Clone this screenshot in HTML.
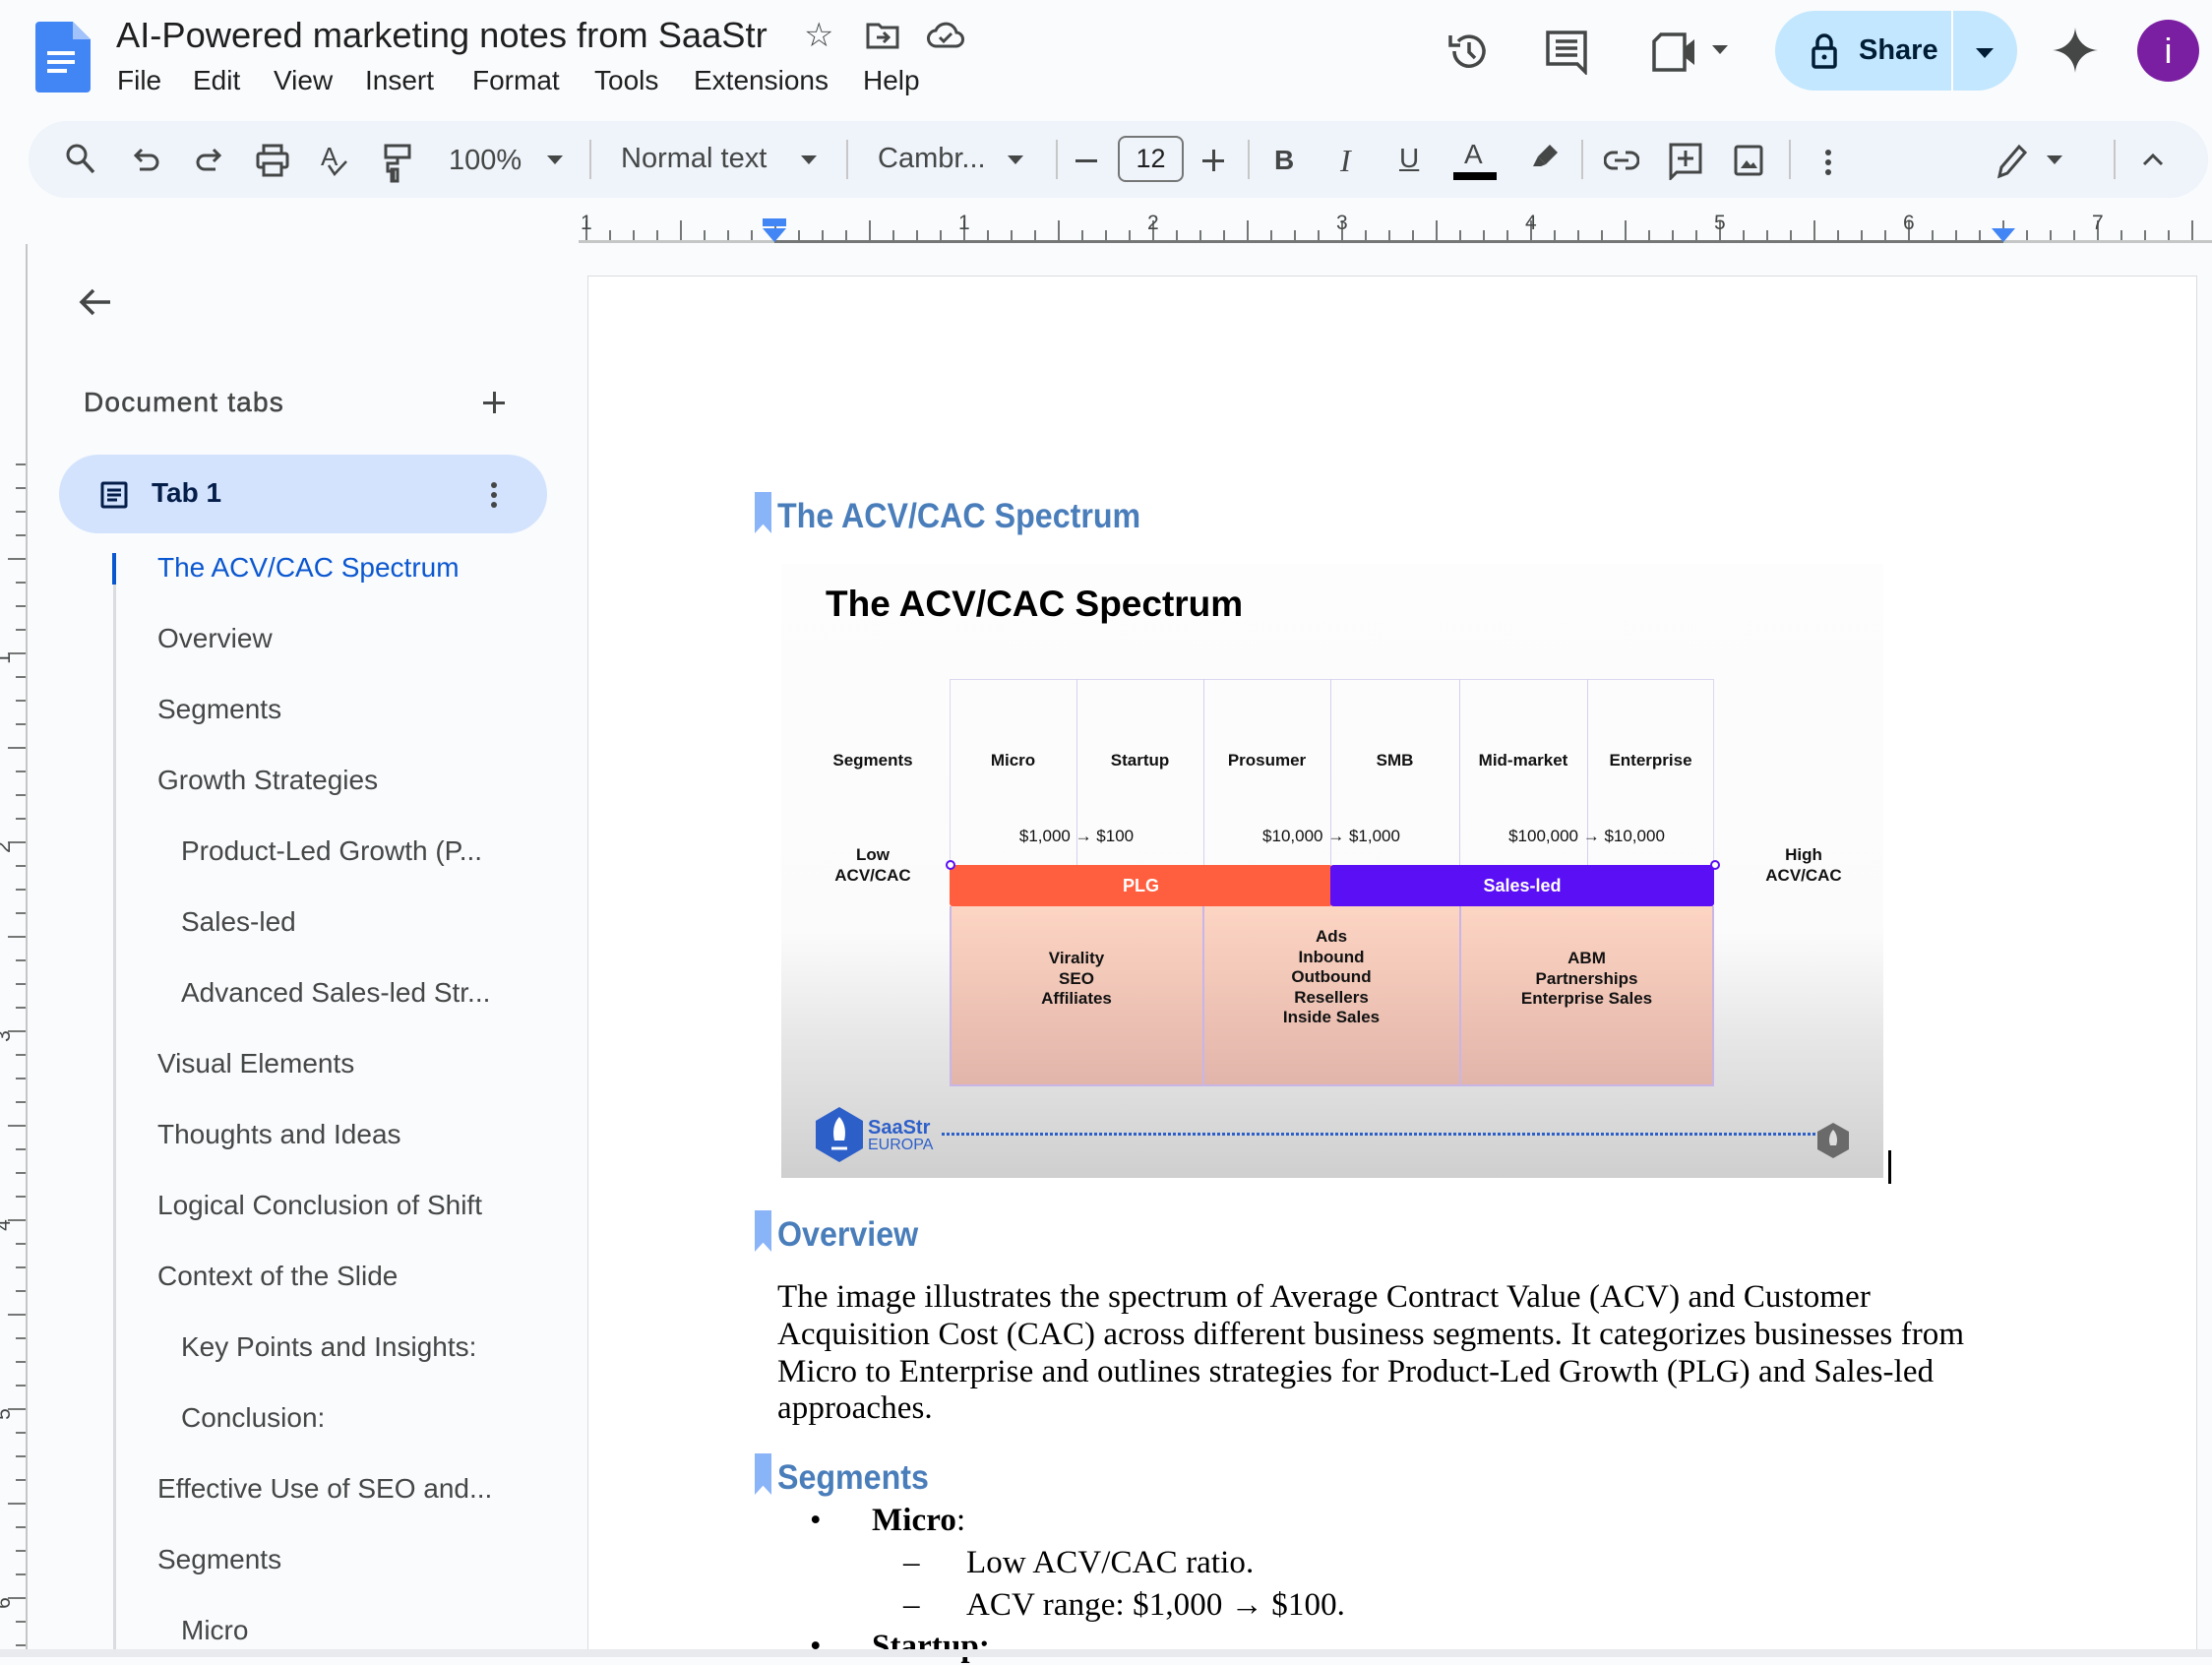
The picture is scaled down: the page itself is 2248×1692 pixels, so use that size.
<!DOCTYPE html>
<html><head><meta charset="utf-8">
<style>
*{margin:0;padding:0;box-sizing:border-box}
body{width:2248px;height:1684px;overflow:hidden;background:#f9fbfd;font-family:"Liberation Sans",sans-serif;color:#1f1f1f;position:relative}
.a{position:absolute;white-space:nowrap}
.ic{position:absolute}
.menu span{position:absolute;top:0}
.tb{color:#444746;font-size:29px}
.sep{position:absolute;top:142px;width:2px;height:40px;background:#c7c7c7}
.out{position:absolute;font-size:28px;color:#444746;white-space:nowrap}
.h{position:absolute;font-family:"Liberation Sans Narrow","Liberation Sans",sans-serif;font-weight:bold;color:#4a7ebb;font-size:35px;white-space:nowrap;transform:scaleX(0.92);transform-origin:0 0}
.bm{position:absolute;width:17px;height:42px;background:#8ab4f8;clip-path:polygon(0 0,100% 0,100% 100%,50% 78%,0 100%)}
.ser{font-family:"Liberation Serif",serif;font-size:33px;color:#000;position:absolute;white-space:nowrap;letter-spacing:0.1px}
.sl{position:absolute;font-weight:bold;font-size:17px;text-align:center;line-height:20.5px;color:#111}
</style></head><body>

<svg class="ic" style="left:36px;top:22px" width="56" height="72" viewBox="0 0 56 72"><path d="M4 0h34l18 18v50a4 4 0 0 1-4 4H4a4 4 0 0 1-4-4V4a4 4 0 0 1 4-4z" fill="#4285f4"/><path d="M38 0v18h18z" fill="#a1c2fa"/><rect x="12" y="30" width="28" height="4" fill="#fff"/><rect x="12" y="39" width="28" height="4" fill="#fff"/><rect x="12" y="48" width="20" height="4" fill="#fff"/></svg>
<div class="a" style="left:118px;top:15px;font-size:36.3px;color:#1f1f1f">AI-Powered marketing notes from SaaStr</div>
<div class="a" style="left:817px;top:16px;font-size:34px;color:#444746">☆</div>
<svg class="ic" style="left:880px;top:22px" width="34" height="28" viewBox="0 0 34 28"><path d="M2 3h11l3 3h16v20H2z" fill="none" stroke="#444746" stroke-width="3"/><path d="M11 16h12M18 11l5 5-5 5" fill="none" stroke="#444746" stroke-width="3"/></svg>
<svg class="ic" style="left:942px;top:20px" width="38" height="30" viewBox="0 0 38 30"><path d="M10 27a8 8 0 0 1-1-16 11 11 0 0 1 21 2 7 7 0 0 1-1 14z" fill="none" stroke="#444746" stroke-width="3"/><path d="M13 18l4 4 8-8" fill="none" stroke="#444746" stroke-width="3"/></svg>
<div class="a menu" style="left:0;top:66px;font-size:28px;color:#1f1f1f"><span style="left:119px">File</span><span style="left:196px">Edit</span><span style="left:278px">View</span><span style="left:371px">Insert</span><span style="left:480px">Format</span><span style="left:604px">Tools</span><span style="left:705px">Extensions</span><span style="left:877px">Help</span></div>

<svg class="ic" style="left:1470px;top:30px" width="44" height="44" viewBox="0 0 44 44"><path d="M8 22a15 15 0 1 0 4-10" fill="none" stroke="#444746" stroke-width="3.5"/><path d="M4 6v10h10" fill="none" stroke="#444746" stroke-width="3.5"/><path d="M23 13v10l6 6" fill="none" stroke="#444746" stroke-width="3.5"/></svg>
<svg class="ic" style="left:1570px;top:30px" width="44" height="46" viewBox="0 0 44 46"><path d="M3 3h38v30h0v10l-8-8H3z" fill="none" stroke="#444746" stroke-width="3.5"/><path d="M11 12h22M11 19h22M11 26h22" stroke="#444746" stroke-width="3.5"/></svg>
<svg class="ic" style="left:1678px;top:32px" width="48" height="42" viewBox="0 0 48 42"><path d="M10 3h24v36H3V10z" fill="none" stroke="#444746" stroke-width="3.5"/><path d="M34 16l10-8v26l-10-8z" fill="#444746"/></svg>
<div class="a" style="left:1740px;top:46px;width:0;height:0;border-left:8px solid transparent;border-right:8px solid transparent;border-top:9px solid #444746"></div>
<div class="a" style="left:1804px;top:11px;width:246px;height:81px;border-radius:41px;background:#c2e7ff"></div>
<div class="a" style="left:1983px;top:11px;width:2px;height:81px;background:#fff"></div>
<svg class="ic" style="left:1841px;top:34px" width="26" height="36" viewBox="0 0 26 36"><rect x="2" y="15" width="22" height="19" rx="2" fill="none" stroke="#001d35" stroke-width="3.5"/><path d="M6 15V9a7 7 0 0 1 14 0v6" fill="none" stroke="#001d35" stroke-width="3.5"/><circle cx="13" cy="24" r="2.5" fill="#001d35"/></svg>
<div class="a" style="left:1889px;top:35px;font-size:29px;color:#001d35;font-weight:bold">Share</div>
<div class="a" style="left:2008px;top:49px;width:0;height:0;border-left:9px solid transparent;border-right:9px solid transparent;border-top:10px solid #001d35"></div>
<svg class="ic" style="left:2086px;top:28px" width="46" height="46" viewBox="0 0 46 46"><path d="M23 0C24 13 33 22 46 23 33 24 24 33 23 46 22 33 13 24 0 23 13 22 22 13 23 0z" fill="#444746"/></svg>
<div class="a" style="left:2172px;top:20px;width:63px;height:63px;border-radius:50%;background:#7b1fa2;color:#fff;font-size:36px;text-align:center;line-height:63px">i</div>

<div class="a" style="left:29px;top:123px;width:2215px;height:78px;border-radius:39px;background:#eff3fa"></div>
<svg class="ic" style="left:66px;top:145px" width="32" height="34" viewBox="0 0 32 34"><circle cx="12" cy="12" r="9" fill="none" stroke="#444746" stroke-width="3"/><path d="M19 19l10 11" stroke="#444746" stroke-width="3.5"/></svg>
<svg class="ic" style="left:134px;top:150px" width="30" height="28" viewBox="0 0 30 28"><path d="M6 8h13a7 7 0 0 1 0 14H8" fill="none" stroke="#444746" stroke-width="3"/><path d="M10 2L4 8l6 6" fill="none" stroke="#444746" stroke-width="3"/></svg>
<svg class="ic" style="left:197px;top:150px" width="30" height="28" viewBox="0 0 30 28"><path d="M24 8H11a7 7 0 0 0 0 14h11" fill="none" stroke="#444746" stroke-width="3"/><path d="M20 2l6 6-6 6" fill="none" stroke="#444746" stroke-width="3"/></svg>
<svg class="ic" style="left:260px;top:146px" width="34" height="34" viewBox="0 0 34 34"><rect x="8" y="2" width="18" height="8" fill="none" stroke="#444746" stroke-width="3"/><rect x="2" y="10" width="30" height="14" rx="2" fill="none" stroke="#444746" stroke-width="3"/><rect x="8" y="20" width="18" height="12" fill="#eff3fa" stroke="#444746" stroke-width="3"/></svg>
<div class="a" style="left:326px;top:144px;font-size:26px;color:#444746">A</div>
<svg class="ic" style="left:332px;top:162px" width="22" height="18" viewBox="0 0 22 18"><path d="M2 6l6 9L20 2" fill="none" stroke="#444746" stroke-width="2.5"/></svg>
<svg class="ic" style="left:390px;top:146px" width="28" height="40" viewBox="0 0 28 40"><rect x="2" y="2" width="24" height="12" fill="none" stroke="#444746" stroke-width="3"/><path d="M14 14v6H4v8h6v10" fill="none" stroke="#444746" stroke-width="3"/><rect x="8" y="26" width="6" height="12" fill="none" stroke="#444746" stroke-width="3"/></svg>
<div class="a tb" style="left:456px;top:147px">100%</div>
<div class="a" style="left:556px;top:158px;border-left:8px solid transparent;border-right:8px solid transparent;border-top:9px solid #444746"></div>
<div class="sep" style="left:599px"></div>
<div class="a tb" style="left:631px;top:145px">Normal text</div>
<div class="a" style="left:814px;top:158px;border-left:8px solid transparent;border-right:8px solid transparent;border-top:9px solid #444746"></div>
<div class="sep" style="left:860px"></div>
<div class="a tb" style="left:892px;top:145px">Cambr...</div>
<div class="a" style="left:1024px;top:158px;border-left:8px solid transparent;border-right:8px solid transparent;border-top:9px solid #444746"></div>
<div class="sep" style="left:1073px"></div>
<div class="a" style="left:1093px;top:162px;width:22px;height:3px;background:#444746"></div>
<div class="a" style="left:1136px;top:138px;width:67px;height:47px;border:2px solid #747775;border-radius:8px;font-size:27px;color:#1f1f1f;text-align:center;line-height:43px">12</div>
<div class="a" style="left:1222px;top:162px;width:22px;height:3px;background:#444746"></div>
<div class="a" style="left:1232px;top:152px;width:3px;height:22px;background:#444746"></div>
<div class="sep" style="left:1268px"></div>
<div class="a" style="left:1295px;top:147px;font-weight:bold;font-size:28px;color:#444746">B</div>
<div class="a" style="left:1362px;top:145px;font-style:italic;font-family:'Liberation Serif',serif;font-size:32px;color:#444746">I</div>
<div class="a" style="left:1422px;top:145px;text-decoration:underline;font-size:28px;color:#444746">U</div>
<div class="a" style="left:1488px;top:141px;font-size:28px;color:#444746">A</div>
<div class="a" style="left:1477px;top:175px;width:44px;height:8px;background:#000"></div>
<svg class="ic" style="left:1555px;top:145px" width="30" height="30" viewBox="0 0 30 30"><path d="M20 2l8 8-12 12-8-8z" fill="#444746"/><path d="M8 14l-5 10h8l5-2" fill="#444746"/></svg>
<div class="sep" style="left:1607px"></div>
<svg class="ic" style="left:1630px;top:152px" width="36" height="22" viewBox="0 0 36 22"><path d="M14 3H9a8 8 0 0 0 0 16h5M22 3h5a8 8 0 0 1 0 16h-5M11 11h14" fill="none" stroke="#444746" stroke-width="3"/></svg>
<svg class="ic" style="left:1696px;top:145px" width="34" height="38" viewBox="0 0 34 38"><path d="M2 2h30v28H8l-6 6z" fill="none" stroke="#444746" stroke-width="3"/><path d="M17 8v16M9 16h16" stroke="#444746" stroke-width="3"/></svg>
<svg class="ic" style="left:1762px;top:147px" width="30" height="32" viewBox="0 0 30 32"><rect x="2" y="2" width="26" height="28" rx="2" fill="none" stroke="#444746" stroke-width="3"/><path d="M7 24l6-8 4 5 3-3 4 6z" fill="#444746"/></svg>
<div class="sep" style="left:1818px"></div>
<div class="a" style="left:1855px;top:152px;width:6px;height:6px;border-radius:50%;background:#444746;box-shadow:0 10px 0 #444746,0 20px 0 #444746"></div>
<svg class="ic" style="left:2030px;top:146px" width="30" height="36" viewBox="0 0 30 36"><path d="M22 3l6 6L10 30l-8 3 2-9z" fill="none" stroke="#444746" stroke-width="3"/></svg>
<div class="a" style="left:2080px;top:158px;border-left:8px solid transparent;border-right:8px solid transparent;border-top:9px solid #444746"></div>
<div class="sep" style="left:2148px"></div>
<svg class="ic" style="left:2177px;top:155px" width="22" height="14" viewBox="0 0 22 14"><path d="M2 12l9-9 9 9" fill="none" stroke="#444746" stroke-width="3"/></svg>

<div class="a" style="left:588px;top:244px;width:1660px;height:3px;background:#747775"></div>
<div class="a" style="left:588px;top:244px;width:199px;height:3px;background:#c4c7c5"></div>
<div class="a" style="left:2036px;top:244px;width:212px;height:3px;background:#c4c7c5"></div>
<div class="a" style="left:595px;top:234px;width:1653px;height:10px;background:repeating-linear-gradient(90deg,#747775 0 2px,transparent 2px 24px)"></div>
<div class="a" style="left:595px;top:224px;width:1653px;height:20px;background:repeating-linear-gradient(90deg,#747775 0 2px,transparent 2px 96px)"></div>
<div class="a" style="left:590px;top:215px;font-size:21px;color:#444746">1</div>
<div class="a" style="left:974px;top:215px;font-size:21px;color:#444746">1</div>
<div class="a" style="left:1166px;top:215px;font-size:21px;color:#444746">2</div>
<div class="a" style="left:1358px;top:215px;font-size:21px;color:#444746">3</div>
<div class="a" style="left:1550px;top:215px;font-size:21px;color:#444746">4</div>
<div class="a" style="left:1742px;top:215px;font-size:21px;color:#444746">5</div>
<div class="a" style="left:1934px;top:215px;font-size:21px;color:#444746">6</div>
<div class="a" style="left:2126px;top:215px;font-size:21px;color:#444746">7</div>
<div class="a" style="left:775px;top:222px;width:24px;height:8px;background:#4285f4"></div>
<div class="a" style="left:775px;top:232px;border-left:12px solid transparent;border-right:12px solid transparent;border-top:14px solid #4285f4"></div>
<div class="a" style="left:2024px;top:232px;border-left:12px solid transparent;border-right:12px solid transparent;border-top:14px solid #4285f4"></div>

<div class="a" style="left:26px;top:248px;width:2px;height:1436px;background:#c4c7c5"></div>
<div class="a" style="left:16px;top:471px;width:10px;height:1213px;background:repeating-linear-gradient(180deg,#747775 0 2px,transparent 2px 24px)"></div>
<div class="a" style="left:8px;top:567px;width:18px;height:1117px;background:repeating-linear-gradient(180deg,#747775 0 2px,transparent 2px 96px)"></div>
<div class="a" style="left:-2px;top:657px;font-size:21px;color:#444746;transform:rotate(-90deg)">1</div>
<div class="a" style="left:-2px;top:849px;font-size:21px;color:#444746;transform:rotate(-90deg)">2</div>
<div class="a" style="left:-2px;top:1041px;font-size:21px;color:#444746;transform:rotate(-90deg)">3</div>
<div class="a" style="left:-2px;top:1233px;font-size:21px;color:#444746;transform:rotate(-90deg)">4</div>
<div class="a" style="left:-2px;top:1425px;font-size:21px;color:#444746;transform:rotate(-90deg)">5</div>
<div class="a" style="left:-2px;top:1617px;font-size:21px;color:#444746;transform:rotate(-90deg)">6</div>

<svg class="ic" style="left:80px;top:292px" width="34" height="30" viewBox="0 0 34 30"><path d="M32 15H4M15 3L3 15l12 12" fill="none" stroke="#444746" stroke-width="3.5"/></svg>
<div class="a" style="left:85px;top:393px;font-size:28px;color:#444746;letter-spacing:1.2px;-webkit-text-stroke:0.5px #444746">Document tabs</div>
<div class="a" style="left:491px;top:408px;width:22px;height:3px;background:#444746"></div>
<div class="a" style="left:501px;top:398px;width:3px;height:22px;background:#444746"></div>
<div class="a" style="left:60px;top:462px;width:496px;height:80px;border-radius:40px;background:#d3e3fd"></div>
<svg class="ic" style="left:102px;top:489px" width="28" height="28" viewBox="0 0 28 28"><rect x="2" y="2" width="24" height="24" rx="1" fill="none" stroke="#041e49" stroke-width="3"/><path d="M7 9h14M7 14h14M7 19h10" stroke="#041e49" stroke-width="3"/></svg>
<div class="a" style="left:154px;top:485px;font-size:28px;color:#041e49;font-weight:bold">Tab 1</div>
<div class="a" style="left:499px;top:490px;width:6px;height:6px;border-radius:50%;background:#444746;box-shadow:0 10px 0 #444746,0 20px 0 #444746"></div>
<div class="a" style="left:115px;top:564px;width:3px;height:1120px;background:#dadce0"></div>
<div class="a" style="left:114px;top:562px;width:4px;height:32px;background:#0b57d0"></div>
<div class="out" style="left:160px;top:561px;color:#0b57d0">The ACV/CAC Spectrum</div>
<div class="out" style="left:160px;top:633px">Overview</div>
<div class="out" style="left:160px;top:705px">Segments</div>
<div class="out" style="left:160px;top:777px">Growth Strategies</div>
<div class="out" style="left:184px;top:849px">Product-Led Growth (P...</div>
<div class="out" style="left:184px;top:921px">Sales-led</div>
<div class="out" style="left:184px;top:993px">Advanced Sales-led Str...</div>
<div class="out" style="left:160px;top:1065px">Visual Elements</div>
<div class="out" style="left:160px;top:1137px">Thoughts and Ideas</div>
<div class="out" style="left:160px;top:1209px">Logical Conclusion of Shift</div>
<div class="out" style="left:160px;top:1281px">Context of the Slide</div>
<div class="out" style="left:184px;top:1353px">Key Points and Insights:</div>
<div class="out" style="left:184px;top:1425px">Conclusion:</div>
<div class="out" style="left:160px;top:1497px">Effective Use of SEO and...</div>
<div class="out" style="left:160px;top:1569px">Segments</div>
<div class="out" style="left:184px;top:1641px">Micro</div>

<div class="a" style="left:597px;top:280px;width:1636px;height:1404px;background:#fff;border:1px solid #dadce0"></div>

<div class="bm" style="left:767px;top:500px"></div>
<div class="h" style="left:790px;top:505px">The ACV/CAC Spectrum</div>

<div class="a" style="left:794px;top:573px;width:1120px;height:624px;background:linear-gradient(180deg,#fcfdfc 0%,#fbfbfb 60%,#e6e6e6 78%,#cfcfcf 100%);overflow:hidden">
  <div class="a" style="left:45px;top:20px;font-size:37px;font-weight:bold;color:#000">The ACV/CAC Spectrum</div>
  <div class="a" style="left:171px;top:117px;width:777px;height:189px;border:1px solid #dcd8f0;border-bottom:none"></div>
  <div class="a" style="left:300px;top:117px;width:1px;height:189px;background:#d5d0ee"></div>
  <div class="a" style="left:429px;top:117px;width:1px;height:189px;background:#d5d0ee"></div>
  <div class="a" style="left:558px;top:117px;width:1px;height:189px;background:#d5d0ee"></div>
  <div class="a" style="left:689px;top:117px;width:1px;height:189px;background:#d5d0ee"></div>
  <div class="a" style="left:819px;top:117px;width:1px;height:189px;background:#d5d0ee"></div>
  <div class="sl" style="left:28px;top:190px;width:130px">Segments</div>
  <div class="sl" style="left:171px;top:190px;width:129px">Micro</div>
  <div class="sl" style="left:300px;top:190px;width:129px">Startup</div>
  <div class="sl" style="left:429px;top:190px;width:129px">Prosumer</div>
  <div class="sl" style="left:558px;top:190px;width:131px">SMB</div>
  <div class="sl" style="left:689px;top:190px;width:130px">Mid-market</div>
  <div class="sl" style="left:819px;top:190px;width:129px">Enterprise</div>
  <div class="sl" style="left:171px;top:267px;width:258px;font-weight:normal">$1,000 → $100</div>
  <div class="sl" style="left:429px;top:267px;width:260px;font-weight:normal">$10,000 → $1,000</div>
  <div class="sl" style="left:689px;top:267px;width:259px;font-weight:normal">$100,000 → $10,000</div>
  <div class="sl" style="left:28px;top:286px;width:130px">Low<br>ACV/CAC</div>
  <div class="sl" style="left:974px;top:286px;width:130px">High<br>ACV/CAC</div>
  <div class="a" style="left:171px;top:306px;width:389px;height:42px;background:#ff5f3f;border-radius:3px;color:#fff;font-weight:bold;font-size:18px;text-align:center;line-height:42px">PLG</div>
  <div class="a" style="left:558px;top:306px;width:390px;height:42px;background:#5b0ff5;border-radius:3px;color:#fff;font-weight:bold;font-size:18px;text-align:center;line-height:42px">Sales-led</div>
  <div class="a" style="left:167px;top:301px;width:10px;height:10px;border-radius:50%;border:2px solid #5b0ff5;background:#fff"></div>
  <div class="a" style="left:944px;top:301px;width:10px;height:10px;border-radius:50%;border:2px solid #5b0ff5;background:#fff"></div>
  <div class="a" style="left:171px;top:348px;width:777px;height:183px;background:linear-gradient(180deg,#fdd5c3,#e2b5aa);border:2px solid #c9b5e6;border-top:none"></div>
  <div class="a" style="left:428px;top:348px;width:2px;height:183px;background:#c9b5e6"></div>
  <div class="a" style="left:689px;top:348px;width:2px;height:183px;background:#c9b5e6"></div>
  <div class="sl" style="left:171px;top:391px;width:258px">Virality<br>SEO<br>Affiliates</div>
  <div class="sl" style="left:429px;top:369px;width:260px">Ads<br>Inbound<br>Outbound<br>Resellers<br>Inside Sales</div>
  <div class="sl" style="left:689px;top:391px;width:259px">ABM<br>Partnerships<br>Enterprise Sales</div>
  <svg class="ic" style="left:31px;top:550px" width="56" height="60" viewBox="0 0 56 60"><path d="M28 2l24 14v28L28 58 4 44V16z" fill="#2d5fc9"/><path d="M28 12c6 6 7 16 5 24H23c-2-8-1-18 5-24z" fill="#fff"/><path d="M20 44h16" stroke="#fff" stroke-width="3"/></svg>
  <div class="a" style="left:88px;top:562px;font-size:20px;font-weight:bold;color:#2d5fc9">SaaStr</div>
  <div class="a" style="left:88px;top:582px;font-size:16px;color:#2d5fc9">EUROPA</div>
  <div class="a" style="left:163px;top:578px;width:900px;height:3px;background:repeating-linear-gradient(90deg,#2d5fc9 0 3px,transparent 3px 5px)"></div>
  <svg class="ic" style="left:1050px;top:566px" width="38" height="40" viewBox="0 0 38 40"><path d="M19 2l16 9v18L19 38 3 29V11z" fill="#6a6a6a"/><path d="M19 9c4 4 5 11 3 16h-6c-2-5-1-12 3-16z" fill="#ddd"/></svg>
</div>
<div class="a" style="left:1919px;top:1169px;width:3px;height:34px;background:#000"></div>

<div class="bm" style="left:767px;top:1230px"></div>
<div class="h" style="left:790px;top:1235px">Overview</div>
<div class="ser" style="left:790px;top:1300px">The image illustrates the spectrum of Average Contract Value (ACV) and Customer</div>
<div class="ser" style="left:790px;top:1338px">Acquisition Cost (CAC) across different business segments. It categorizes businesses from</div>
<div class="ser" style="left:790px;top:1376px">Micro to Enterprise and outlines strategies for Product-Led Growth (PLG) and Sales-led</div>
<div class="ser" style="left:790px;top:1413px">approaches.</div>

<div class="bm" style="left:767px;top:1477px"></div>
<div class="h" style="left:790px;top:1482px">Segments</div>
<div class="ser" style="left:823px;top:1527px">•</div>
<div class="ser" style="left:886px;top:1527px;font-weight:bold">Micro<span style="font-weight:normal">:</span></div>
<div class="ser" style="left:918px;top:1570px">–</div>
<div class="ser" style="left:982px;top:1570px">Low ACV/CAC ratio.</div>
<div class="ser" style="left:918px;top:1613px">–</div>
<div class="ser" style="left:982px;top:1613px">ACV range: $1,000 → $100.</div>
<div class="ser" style="left:823px;top:1655px">•</div>
<div class="ser" style="left:886px;top:1655px;font-weight:bold">Startup:</div>
<div class="a" style="left:0;top:1676px;width:2248px;height:8px;background:#e8eaed"></div>
</body></html>
